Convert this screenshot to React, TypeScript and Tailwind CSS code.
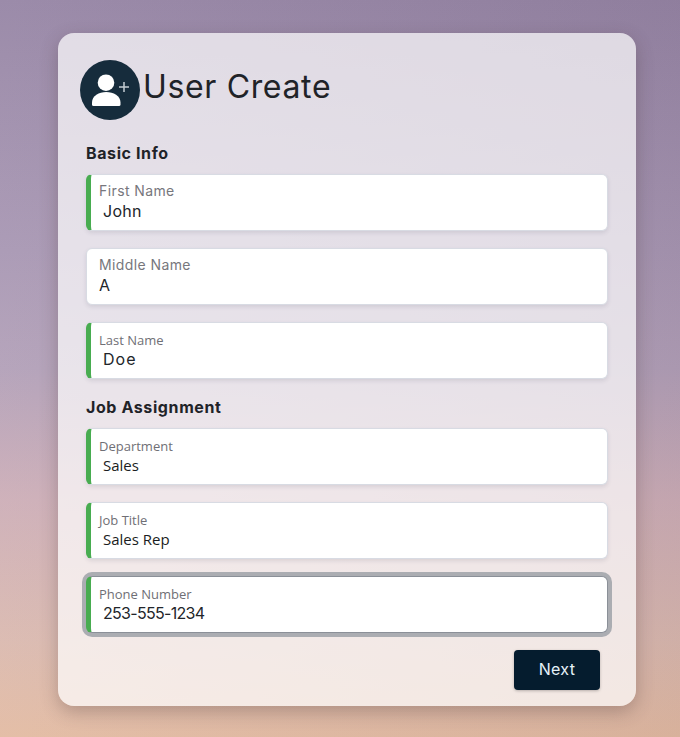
import React from "react";

const MONT = "font-['Inter','Noto_Sans',sans-serif]";
const OPEN = "font-['Open_Sans','Noto_Sans',sans-serif]";

type FieldProps = {
  label: string;
  value: string;
  required?: boolean;
  focused?: boolean;
  labelClass: string;
  valueClass: string;
};

const Field: React.FC<FieldProps> = ({ label, value, required, focused, labelClass, valueClass }) => (
  <div
    className={
      focused
        ? "h-[57px] rounded-[6px] bg-white border border-[#8b9098] border-l-[5px] border-l-[#48ac50] ring-[4px] ring-[#abadb2] pl-[8px] pt-[8px]"
        : required
          ? "h-[57px] rounded-[6px] bg-white border border-[#d8dbe3] border-l-[5px] border-l-[#48ac50] shadow-[0_2px_4px_rgba(60,60,80,0.12)] pl-[8px] pt-[8px]"
          : "h-[57px] rounded-[6px] bg-white border border-[#d8dbe3] shadow-[0_2px_4px_rgba(60,60,80,0.12)] pl-[12px] pt-[8px]"
    }
  >
    <div className={labelClass}>{label}</div>
    <div className={valueClass}>{value}</div>
  </div>
);

export default function App() {
  return (
    <div className="min-h-[737px] overflow-hidden pt-[33px] pl-[58px] bg-[linear-gradient(to_right,rgba(255,255,255,0.05),rgba(40,20,40,0.06)),linear-gradient(180deg,#9685a5_0%,#a897b3_34%,#b2a0b8_50%,#cdaeb7_68%,#dab9af_87%,#e3bba2_100%)]">
      <div className="w-[578px] h-[673px] rounded-[16px] bg-white/70 shadow-[0_6px_18px_rgba(70,50,50,0.3)] pt-[27px] px-[28px]">
        {/* Header */}
        <div className="flex items-center h-[60px] -ml-[6px]">
          <svg width="60" height="60" viewBox="0 0 60 60" className="shrink-0">
            <circle cx="30" cy="30" r="30" fill="#162c3c" />
            <circle cx="26" cy="22.7" r="8.3" fill="#fff" />
            <path
              d="M12 44.5v-2C12 36 19 32 26.2 32s14.3 4 14.3 10.5v2a1.5 1.5 0 0 1-1.5 1.5H13.5a1.5 1.5 0 0 1-1.5-1.5z"
              fill="#fff"
            />
            <path d="M44 22v10M39 27h10" stroke="#c4ccd2" strokeWidth="1.5" />
          </svg>
          <h1 className={`${MONT} ml-[3px] pb-[6px] text-[32px] leading-none font-normal text-[#1f2328] tracking-[0.65px]`}>
            User Create
          </h1>
        </div>

        <h2 className={`${MONT} mt-[24px] h-[18px] text-[16px] leading-[18px] font-bold text-[#1f2328] tracking-[0.6px]`}>
          Basic Info
        </h2>
        <div className="mt-[12px] flex flex-col gap-[17px]">
          <Field
            required
            label="First Name"
            value="John"
            labelClass={`${MONT} text-[14px] leading-[15px] text-[#77777d] tracking-[0.4px]`}
            valueClass={`${MONT} mt-[3px] ml-[4px] text-[16px] leading-[20px] tracking-[0.3px] text-[#22252a]`}
          />
          <Field
            label="Middle Name"
            value="A"
            labelClass={`${MONT} text-[14px] leading-[15px] text-[#77777d] tracking-[0.4px]`}
            valueClass={`${MONT} mt-[3px] text-[16px] leading-[20px] text-[#22252a]`}
          />
          <Field
            required
            label="Last Name"
            value="Doe"
            labelClass={`${OPEN} pt-[2px] text-[13px] leading-[15px] text-[#6f6f75]`}
            valueClass={`${MONT} mt-[1px] ml-[4px] text-[16px] leading-[20px] tracking-[1px] text-[#22252a]`}
          />
        </div>

        <h2 className={`${MONT} mt-[19px] h-[18px] text-[16px] leading-[18px] font-bold text-[#1f2328] tracking-[0.6px]`}>
          Job Assignment
        </h2>
        <div className="mt-[12px] flex flex-col gap-[17px]">
          <Field
            required
            label="Department"
            value="Sales"
            labelClass={`${OPEN} pt-[2px] text-[13px] leading-[15px] text-[#6f6f75]`}
            valueClass={`${OPEN} mt-[1px] ml-[4px] text-[15px] leading-[20px] text-[#1a1d22]`}
          />
          <Field
            required
            label="Job Title"
            value="Sales Rep"
            labelClass={`${OPEN} pt-[2px] text-[13px] leading-[15px] text-[#6f6f75]`}
            valueClass={`${OPEN} mt-[1px] ml-[4px] text-[15px] leading-[20px] text-[#1a1d22]`}
          />
          <Field
            required
            focused
            label="Phone Number"
            value="253-555-1234"
            labelClass={`${OPEN} pt-[2px] text-[13px] leading-[15px] text-[#6f6f75]`}
            valueClass={`${MONT} mt-[1px] ml-[4px] text-[16px] leading-[20px] tracking-[-0.7px] text-[#22252a]`}
          />
        </div>

        <div className="mt-[17px] flex justify-end pr-[8px]">
          <button
            className={`${MONT} w-[86px] h-[40px] rounded-[4px] bg-[#051c2e] text-[16px] text-[#e6f1f8] tracking-[0.3px] pb-[2px] shadow-[0_1px_3px_rgba(0,0,0,0.25)]`}
          >
            Next
          </button>
        </div>
      </div>
    </div>
  );
}
